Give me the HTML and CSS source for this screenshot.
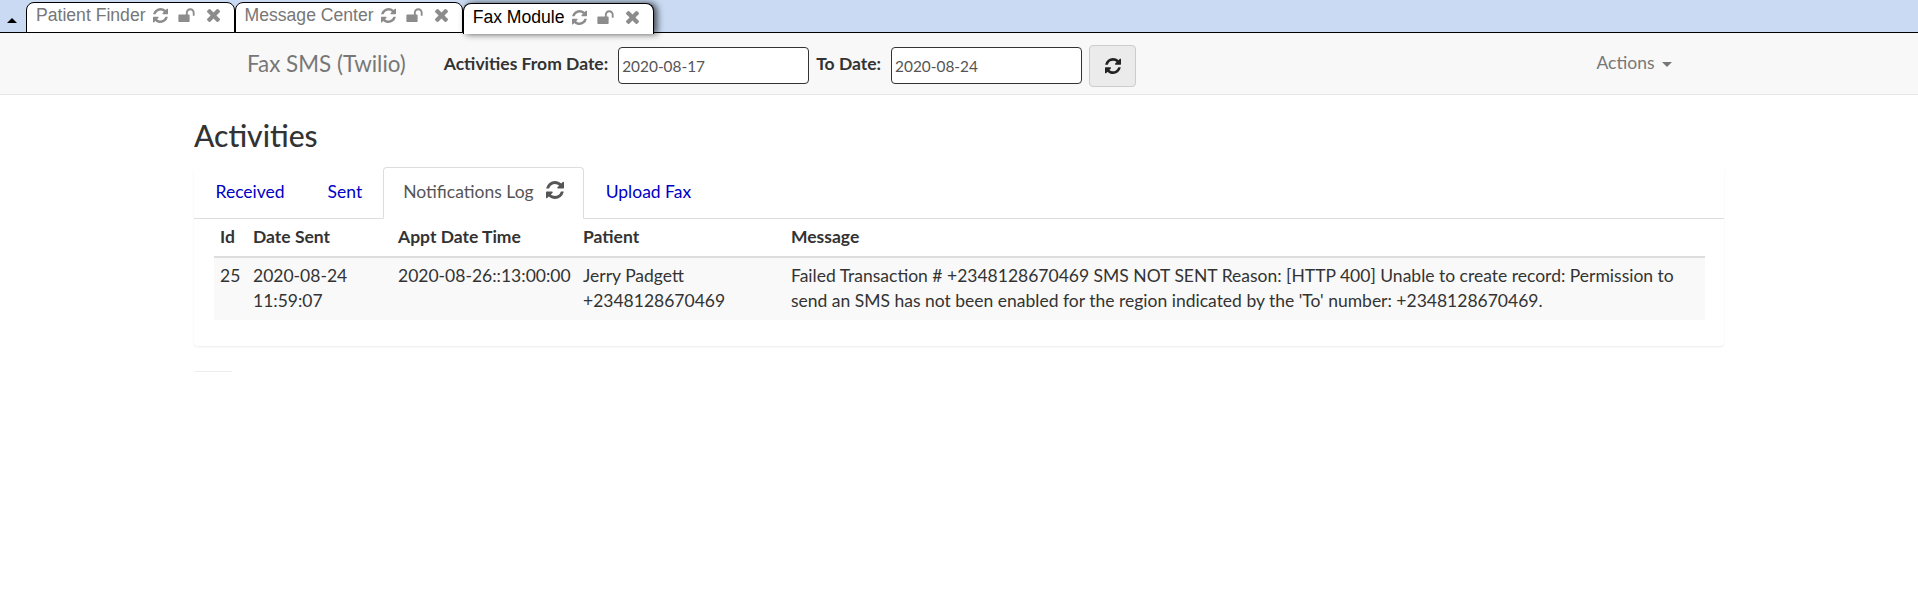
FILE: index.html
```html
<!DOCTYPE html>
<html lang="en">
<head>
    <meta charset="UTF-8">
    <meta name="viewport" content="width=device-width, initial-scale=1.0">
    <title>Fax SMS (Twilio)</title>
    <link rel="stylesheet" href="styles.css">
</head>

<body>
    <svg class="sprites" width="0" height="0">
        <symbol id="i-refresh" viewBox="0 0 1536 1536">
            <path d="M1511 928q0 5-1 7-64 268-268 434.500T764 1536q-146 0-282.500-55T238 1324l-129 129q-19 19-45 19t-45-19-19-45V960q0-26 19-45t45-19h448q26 0 45 19t19 45-19 45l-137 137q71 66 161 102t187 36q134 0 250-65t186-179q11-17 53-117 8-23 30-23h192q13 0 22.500 9.500t9.500 22.500zM1536 128v448q0 26-19 45t-45 19h-448q-26 0-45-19t-19-45 19-45l138-138Q969 256 768 256q-134 0-250 65T332 500q-11 17-53 117-8 23-30 23H50q-13 0-22.500-9.500T18 608v-7q65-268 270-434.500T768 0q146 0 284 55.500T1297 212l130-129q19-19 45-19t45 19 19 45z"/>
        </symbol>
        <symbol id="i-unlock" viewBox="0 0 1664 1536">
            <path d="M1664 480v256q0 26-19 45t-45 19h-64q-26 0-45-19t-19-45V480q0-106-75-181t-181-75-181 75-75 181v192h96q40 0 68 28t28 68v576q0 40-28 68t-68 28H96q-40 0-68-28T0 1344V768q0-40 28-68t68-28h672V480q0-185 131.500-316.500T1216 32t316.500 131.500T1664 480z"/>
        </symbol>
        <symbol id="i-close" viewBox="0 0 1188 1188">
            <path d="M1188 956q0 40-28 68l-136 136q-28 28-68 28t-68-28L594 866l-294 294q-28 28-68 28t-68-28L28 1024q-28-28-28-68t28-68l294-294L28 300Q0 272 0 232t28-68L164 28q28-28 68-28t68 28l294 294L888 28q28-28 68-28t68 28l136 136q28 28 28 68t-28 68L866 594l294 294q28 28 28 68z"/>
        </symbol>
    </svg>

    <!-- Main tabs -->
    <div class="main-tabs">
        <span class="collapse-arrow"></span>
        <div class="main-tab">
            <span class="tab-title">Patient Finder</span>
            <svg class="tab-icon"><use href="#i-refresh"/></svg>
            <svg class="tab-icon lock"><use href="#i-unlock"/></svg>
            <svg class="tab-icon close"><use href="#i-close"/></svg>
        </div>
        <div class="main-tab">
            <span class="tab-title">Message Center</span>
            <svg class="tab-icon"><use href="#i-refresh"/></svg>
            <svg class="tab-icon lock"><use href="#i-unlock"/></svg>
            <svg class="tab-icon close"><use href="#i-close"/></svg>
        </div>
        <div class="main-tab current">
            <span class="tab-title">Fax Module</span>
            <svg class="tab-icon"><use href="#i-refresh"/></svg>
            <svg class="tab-icon lock"><use href="#i-unlock"/></svg>
            <svg class="tab-icon close"><use href="#i-close"/></svg>
        </div>
    </div>

    <!-- Navbar -->
    <nav class="navbar">
        <div class="brand">Fax SMS (Twilio)</div>
        <form class="date-form">
            <label for="from-date">Activities From Date:</label>
            <input class="date-input" id="from-date" type="text" value="2020-08-17">
            <label for="to-date">To Date:</label>
            <input class="date-input" id="to-date" type="text" value="2020-08-24">
            <button class="refresh-btn" type="button"><svg><use href="#i-refresh"/></svg></button>
        </form>
        <a class="actions" href="#">Actions <span class="caret"></span></a>
    </nav>

    <div class="container">
        <h1>Activities</h1>

        <div class="panel">
            <ul class="nav-tabs">
                <li><a href="#">Received</a></li>
                <li><a href="#">Sent</a></li>
                <li class="active"><a href="#">Notifications Log <svg><use href="#i-refresh"/></svg></a></li>
                <li><a href="#">Upload Fax</a></li>
            </ul>
            <div class="tab-content">
                <table>
                    <thead>
                        <tr>
                            <th class="col-id">Id</th>
                            <th class="col-sent">Date Sent</th>
                            <th class="col-appt">Appt Date Time</th>
                            <th class="col-patient">Patient</th>
                            <th>Message</th>
                        </tr>
                    </thead>
                    <tbody>
                        <tr>
                            <td>25</td>
                            <td>2020-08-24 11:59:07</td>
                            <td>2020-08-26::13:00:00</td>
                            <td>Jerry Padgett<br>+2348128670469</td>
                            <td>Failed Transaction # +2348128670469 SMS NOT SENT Reason: [HTTP 400] Unable to create record: Permission to send an SMS has not been enabled for the region indicated by the 'To' number: +2348128670469.</td>
                        </tr>
                    </tbody>
                </table>
            </div>
        </div>

        <hr class="short-rule">
    </div>
</body>
</html>
```

FILE: styles.css
```css
/* General */
body {
    margin: 0;
    background-color: #fff;
    color: #333;
    font-family: Lato, "Liberation Sans", sans-serif;
    font-size: 17.5px;
    line-height: 25px;
}

.sprites {
    position: absolute;
}

/* Main tabs */
.main-tabs {
    display: flex;
    align-items: flex-end;
    height: 33px;
    background-color: #c9daf2;
    box-sizing: border-box;
    border-bottom: 1px solid #000;
    padding-left: 7px;
}

.collapse-arrow {
    width: 0;
    height: 0;
    margin: 0 9px 9px 0;
    border-left: 5.5px solid transparent;
    border-right: 5.5px solid transparent;
    border-bottom: 5px solid #000;
}

.main-tab {
    display: flex;
    align-items: center;
    height: 31px;
    box-sizing: border-box;
    margin-bottom: -1px;
    padding: 0 14px 4px 9px;
    background-color: #fff;
    border: 1px solid #000;
    border-radius: 8px 8px 0 0;
    color: #777;
    font-family: "Liberation Sans", Arial, sans-serif;
    font-size: 17.6px;
}

.main-tab.current {
    margin-bottom: -2px;
    color: #000;
    border-bottom: 0;
    box-shadow: 3px 0 7px rgba(0, 0, 0, 0.7);
}

.tab-icon {
    width: 15px;
    height: 15px;
    margin-left: 7px;
    fill: #8c8c8c;
}

.tab-icon.lock {
    width: 17px;
    height: 15px;
    margin-left: 10px;
}

.tab-icon.close {
    width: 13px;
    height: 13px;
    margin-left: 12px;
}

/* Navbar */
.navbar {
    display: flex;
    align-items: center;
    height: 62px;
    box-sizing: border-box;
    padding: 4px 0 0 247px;
    background-color: #f8f8f8;
    border-bottom: 1px solid #e7e7e7;
}

.brand {
    margin: 0 38px 5px 0;
    color: #777;
    font-size: 22.4px;
}

.date-form {
    display: flex;
    align-items: center;
}

.date-form label {
    margin: 0 10px 5px 0;
    font-weight: 700;
}

.date-input {
    width: 191px;
    height: 37px;
    box-sizing: border-box;
    margin-right: 7px;
    padding: 0 3px;
    background-color: #fff;
    border: 1px solid #333;
    border-radius: 4px;
    color: #555;
    font-family: Lato, sans-serif;
    font-size: 15.4px;
}

.refresh-btn {
    display: flex;
    align-items: center;
    justify-content: center;
    width: 47px;
    height: 42px;
    padding: 0;
    background-color: #ebebeb;
    border: 1px solid #ccc;
    border-radius: 4px;
}

.refresh-btn svg {
    width: 16px;
    height: 16px;
    fill: #222;
}

.actions {
    margin-left: auto;
    margin-right: 246px;
    margin-bottom: 7px;
    color: #777;
    text-decoration: none;
}

.caret {
    display: inline-block;
    width: 0;
    height: 0;
    margin-left: 3px;
    vertical-align: middle;
    border-top: 5px solid #777;
    border-left: 5px solid transparent;
    border-right: 5px solid transparent;
}

/* Content */
.container {
    width: 1530px;
    margin: 0 auto;
}

h1 {
    margin: 24px 0 15px;
    font-size: 30px;
    font-weight: 500;
    line-height: 33px;
}

.panel {
    background-color: #fff;
    border-radius: 4px;
    box-shadow: 0 1px 2px rgba(0, 0, 0, 0.08);
    padding-bottom: 26px;
}

/* Inner tabs */
.nav-tabs {
    display: flex;
    margin: 0;
    padding: 0;
    list-style-type: none;
    border-bottom: 1px solid #ddd;
}

.nav-tabs li {
    margin-bottom: -1px;
}

.nav-tabs a {
    display: flex;
    align-items: center;
    height: 52px;
    box-sizing: border-box;
    padding: 0 20.5px 4px;
    color: #0000c4;
    text-decoration: none;
    border: 1px solid transparent;
    border-radius: 4px 4px 0 0;
}

.nav-tabs .active a {
    color: #555;
    background-color: #fff;
    border-color: #ddd #ddd #fff;
    margin-left: -1px;
    padding-left: 19.5px;
    padding-right: 19.5px;
}

.nav-tabs svg {
    width: 18px;
    height: 18px;
    margin: 0 0 3px 12px;
    fill: #555;
}

/* Table */
.tab-content {
    padding: 0 19px 0 20px;
}

table {
    width: 100%;
    border-collapse: collapse;
}

th, td {
    padding: 0 6px;
    text-align: left;
    box-sizing: border-box;
}

th {
    height: 38px;
    padding-bottom: 2px;
    font-weight: 700;
    border-bottom: 2px solid #ddd;
}

td {
    height: 62px;
    padding-top: 5px;
    padding-bottom: 7px;
    vertical-align: top;
    background-color: #f9f9f9;
}

.col-id {
    width: 33px;
}

.col-sent {
    width: 145px;
}

.col-appt {
    width: 185px;
}

.col-patient {
    width: 208px;
}

.short-rule {
    width: 38px;
    height: 1px;
    margin: 25px 0 0;
    background-color: #eee;
    border: 0;
}
```
